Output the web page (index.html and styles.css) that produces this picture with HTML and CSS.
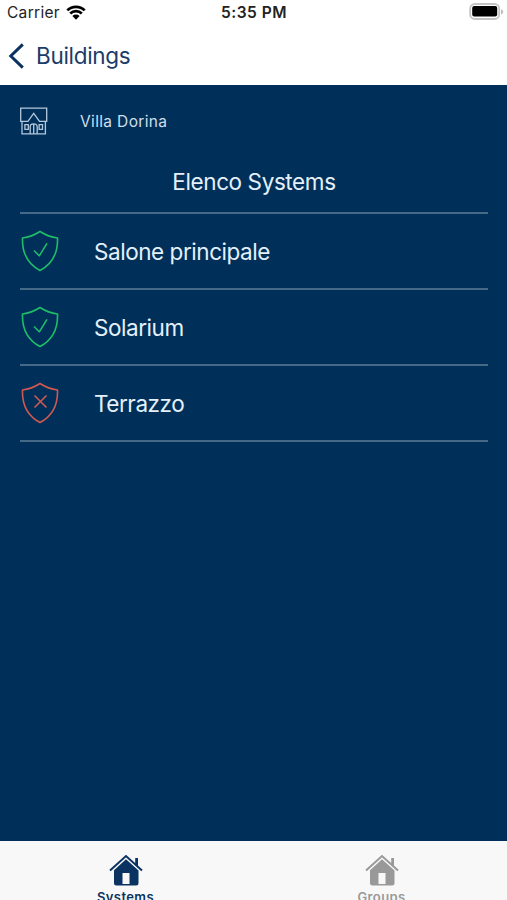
FILE: index.html
```html
<!DOCTYPE html>
<html lang="it">
<head>
  <meta charset="utf-8">
  <title>Systems</title>
  <meta name="viewport" content="width=device-width, initial-scale=1">
  <link rel="stylesheet" href="styles.css">
</head>
<body>

  <!-- status bar -->
  <div class="status">
    <div class="carrier">
      <span>Carrier</span>
      <svg class="wifi" viewBox="0 0 20 15" width="20" height="15">
        <path d="M1.3 5.4a12.4 12.4 0 0 1 17.4 0M4.2 8.5a8.3 8.3 0 0 1 11.6 0" fill="none" stroke="#000" stroke-width="2.7"/>
        <path d="M6.4 11.1a5.1 5.1 0 0 1 7.2 0L10 14.7z"/>
      </svg>
    </div>
    <span class="time">5:35 PM</span>
    <svg class="battery" viewBox="0 0 36 18" width="36" height="18">
      <rect x="1.2" y="1" width="29" height="15" rx="4.5" fill="#fff" stroke="#c4c4c4" stroke-width="1.8"/>
      <rect x="3.2" y="3" width="25" height="10.5" rx="2"/>
      <path d="M32 6.2c3 1.2 3 4 0 5.2z" fill="#bdbdbd"/>
    </svg>
  </div>

  <header class="nav">
    <svg class="back" viewBox="0 0 18 28" width="18" height="28">
      <path d="M15.8 2.4L3.8 14l12 11.6" fill="none" stroke="#0c3263" stroke-width="3"/>
    </svg>
    <span class="nav-title">Buildings</span>
  </header>

  <main>
    <div class="building">
      <svg viewBox="0 0 28 29" width="28" height="29" fill="none" stroke="#b4c8dc" stroke-width="1.3">
        <path d="M.7 1.2h26v13.2h-7.2L13.7 6.4l-5.8 8H.7z"/>
        <path d="M2 14.4v12.5h23.4V14.4"/>
        <path d="M10.2 26.9v-7.2c0-3.7 7-3.7 7 0v7.2M13.7 17v10"/>
        <path d="M4.9 17.7h3.4v4.7H4.9zM19.1 17.7h3.4v4.7h-3.4z"/>
      </svg>
      <span>Villa Dorina</span>
    </div>

    <h1>Elenco Systems</h1>

    <ul class="systems">
      <li>
        <svg class="shield ok" viewBox="0 0 38 42" width="38" height="42">
          <path d="M19 1.5C13.500 5 8 7.200 1.500 8C1 22 6 33.500 19 40.500C32 33.500 37 22 36.500 8C30 7.200 24.500 5 19 1.500z"/>
          <path d="M13 20.500l5.300 5.300 7.700-12.500"/>
        </svg>
        <span>Salone principale</span>
      </li>
      <li>
        <svg class="shield ok" viewBox="0 0 38 42" width="38" height="42">
          <path d="M19 1.5C13.500 5 8 7.200 1.500 8C1 22 6 33.500 19 40.500C32 33.500 37 22 36.500 8C30 7.200 24.500 5 19 1.500z"/>
          <path d="M13 20.500l5.300 5.300 7.700-12.500"/>
        </svg>
        <span>Solarium</span>
      </li>
      <li>
        <svg class="shield alarm" viewBox="0 0 38 42" width="38" height="42">
          <path d="M19 1.5C13.500 5 8 7.200 1.500 8C1 22 6 33.500 19 40.500C32 33.500 37 22 36.500 8C30 7.200 24.500 5 19 1.500z"/>
          <path d="M13.5 13.5l12 12M25.5 13.5l-12 12"/>
        </svg>
        <span>Terrazzo</span>
      </li>
    </ul>
  </main>

  <footer class="tabs">
    <a class="tab active">
      <svg viewBox="0 0 34 32" width="34" height="32">
        <path d="M1 16.5L17 2l16 14.5" fill="none" stroke="currentColor" stroke-width="2"/>
        <path d="M26.2 4H29v9.5l-2.8-2.6z"/>
        <path fill-rule="evenodd" d="M17 5.2l12.5 11.3V29q0 2.5-2.5 2.5H7.5Q5 31.5 5 29V16.2zM13.5 19v11h7V19z"/>
      </svg>
      <span>Systems</span>
    </a>
    <a class="tab">
      <svg viewBox="0 0 34 32" width="34" height="32">
        <path d="M1 16.5L17 2l16 14.5" fill="none" stroke="currentColor" stroke-width="2"/>
        <path d="M26.2 4H29v9.5l-2.8-2.6z"/>
        <path fill-rule="evenodd" d="M17 5.2l12.5 11.3V29q0 2.5-2.5 2.5H7.5Q5 31.5 5 29V16.2zM13.5 19v11h7V19z"/>
      </svg>
      <span>Groups</span>
    </a>
  </footer>

</body>
</html>
```

FILE: styles.css
```css
* {
  box-sizing: border-box;
}
body {
  display: flex;
  flex-direction: column;
  margin: 0;
  height: 900px;
  overflow: hidden;
  background: #fff;
  font-family: Inter, "Liberation Sans", sans-serif;
}

/* status bar */
.status {
  display: grid;
  grid-template-columns: 1fr auto 1fr;
  align-items: center;
  height: 25px;
  padding: 0 2px 0 7px;
  font-size: 15.5px;
  color: #222;
}
.carrier {
  display: flex;
  align-items: center;
  gap: 6px;
  letter-spacing: 0.3px;
}
.time {
  margin-right: 4px;
  font-weight: 600;
  letter-spacing: 0.5px;
}
.battery {
  justify-self: end;
  margin-bottom: 1px;
}

/* navigation */
.nav {
  display: flex;
  align-items: center;
  gap: 11px;
  height: 60px;
  padding: 1px 7px 0;
}
.nav-title {
  font-size: 22.5px;
  letter-spacing: -0.3px;
  color: #1b3c69;
}

main {
  flex: 1;
  padding: 21px 19px 0 20px;
  background: #003059;
  color: #e4f0fa;
}
.building {
  display: flex;
  align-items: center;
  gap: 32px;
  height: 30px;
  font-size: 15.5px;
  letter-spacing: 0.35px;
  color: #d0deeb;
}
h1 {
  margin: 30px 0 0;
  height: 46px;
  line-height: 31px;
  text-align: center;
  font-size: 22.5px;
  font-weight: 400;
  letter-spacing: -0.4px;
}

/* systems list */
.systems {
  margin: 0;
  padding: 0;
  list-style: none;
  border-top: 2px solid #456986;
}
.systems li {
  display: flex;
  align-items: center;
  gap: 35px;
  height: 76px;
  padding-left: 1px;
  border-bottom: 2px solid #456986;
  font-size: 22.5px;
  letter-spacing: -0.45px;
}
.shield {
  fill: none;
  stroke-width: 1.6;
  stroke-linejoin: round;
}
.ok {
  stroke: #20bd69;
}
.alarm {
  stroke: #cf5850;
}

/* tab bar */
.tabs {
  display: flex;
  justify-content: space-between;
  height: 59px;
  background: #f8f8f8;
}
.tab {
  display: flex;
  flex-direction: column;
  align-items: center;
  gap: 3px;
  width: 251px;
  padding-top: 13px;
  font-size: 13px;
  font-weight: 600;
  letter-spacing: 0.4px;
  color: #999;
}
.tab svg {
  flex: none;
  fill: currentColor;
}
.active {
  color: #0b3361;
}
```
